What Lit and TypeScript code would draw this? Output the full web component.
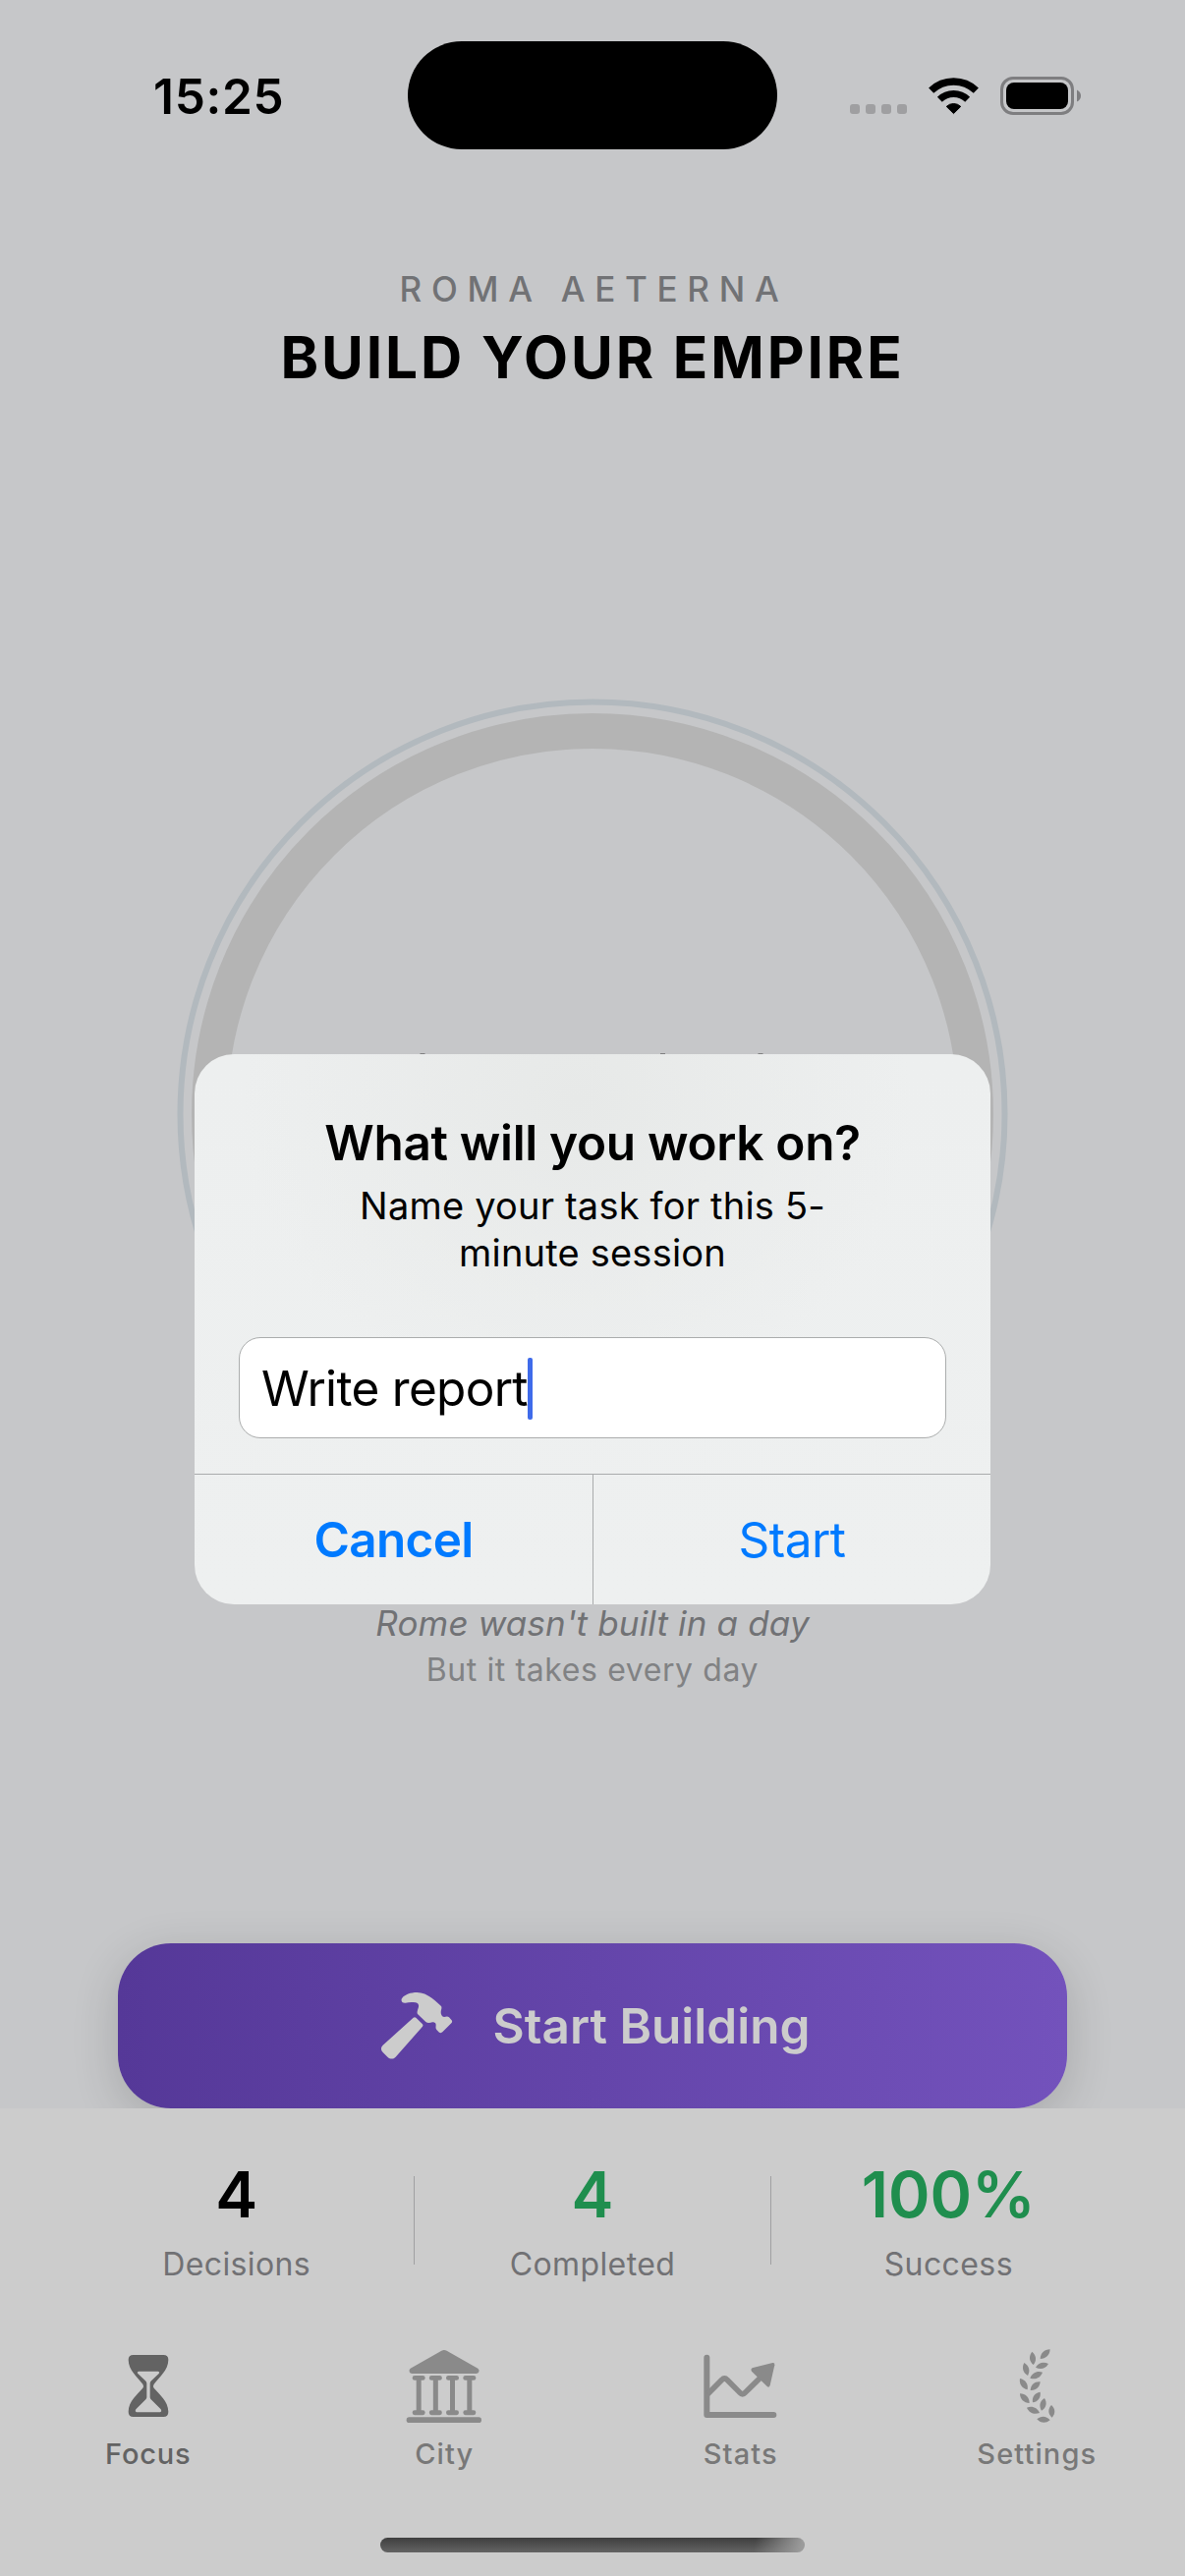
import { LitElement, html, css, svg } from "lit";
import { customElement } from "lit/decorators.js";

type Leaf = [number, number, number, number];

const leaves: Leaf[] = [
  [1137, 64, 1107, 93],
  [1082, 71, 1086, 111],
  [1132, 108, 1093, 119],
  [1058, 105, 1069, 144],
  [1114, 134, 1076, 152],
  [1045, 153, 1068, 187],
  [1107, 163, 1077, 189],
  [1045, 199, 1074, 228],
  [1107, 194, 1084, 226],
  [1120, 213, 1111, 251],
  [1066, 242, 1105, 258],
  [1141, 234, 1143, 272],
  [1097, 277, 1137, 280],
];

// A pointed leaf between two tips, bulging equally to both sides.
function leafPath([x1, y1, x2, y2]: Leaf): string {
  const len = Math.hypot(x2 - x1, y2 - y1);
  const nx = (-(y2 - y1) / len) * 12;
  const ny = ((x2 - x1) / len) * 12;
  const ax = x1 + (x2 - x1) * 0.3;
  const ay = y1 + (y2 - y1) * 0.3;
  const bx = x1 + (x2 - x1) * 0.7;
  const by = y1 + (y2 - y1) * 0.7;
  return `M${x1} ${y1}C${ax + nx} ${ay + ny} ${bx + nx} ${by + ny} ${x2} ${y2}C${bx - nx} ${by - ny} ${ax - nx} ${ay - ny} ${x1} ${y1}Z`;
}

const hourglass = svg`<path fill-rule="evenodd" d="M137 81H229Q244 81 244 96C244 128 215 150 200 170Q196 176 200 182C215 200 244 222 244 254Q244 270 229 270H137Q122 270 122 254C122 222 151 200 166 182Q170 176 166 170C151 150 122 128 122 96Q122 81 137 81ZM153 131Q147 133 151 138L174 160Q178 164 178 168V210Q178 214 175 217L145 247Q141 254 147 256H219Q225 254 221 247L191 217Q188 214 188 210V168Q188 164 192 160L215 138Q219 133 213 131Z"/>`;

const temple = svg`
  <path d="M1079 68Q1087 64 1095 68L1190 122Q1196 127 1193 133Q1191 138 1185 138H989Q983 138 981 133Q979 126 984 122Z"/>
  ${[1009.5, 1061, 1112.5, 1164.5].map(
    (x) => svg`
      <rect x=${x - 19.5} y="144" width="39" height="14.5" rx="7"/>
      <rect x=${x - 7.5} y="150" width="15" height="108"/>
      <rect x=${x - 19.5} y="250" width="39" height="14.5" rx="7"/>`
  )}
  <rect x="972" y="271" width="229" height="17" rx="8.5"/>`;

const chart = svg`
  <path d="M87 89V264H291" fill="none" stroke="currentColor" stroke-width="18" stroke-linecap="round" stroke-linejoin="round"/>
  <path d="M90 200L133 157Q141 148 149 157L188 196Q196 205 204 196L258 143" fill="none" stroke="currentColor" stroke-width="17"/>
  <path d="M228 120L288 105Q295 104 294 112L280 174Q277 182 271 177L224 131Q219 123 228 120Z"/>`;

const laurel = svg`${leaves.map((l) => svg`<path d=${leafPath(l)}/>`)}`;

@customElement("app-root")
export class AppRoot extends LitElement {
  static styles = css`
    :host {
      display: block;
      font-family: Inter, "Liberation Sans", sans-serif;
    }
    * {
      box-sizing: border-box;
    }
    .screen {
      position: relative;
      width: 1206px;
      height: 2622px;
      display: flex;
      flex-direction: column;
      overflow: hidden;
      background: #c6c7c9;
      color: #000;
      white-space: nowrap;
    }
    svg {
      display: block;
    }
    .status {
      height: 196px;
      padding-top: 42px;
      display: grid;
      grid-template-columns: 415px 376px 415px;
      align-items: start;
    }
    .time {
      padding: 0 0 0 156px;
      font-size: 49.5px;
      line-height: 112px;
      font-weight: 600;
      letter-spacing: 0.7px;
    }
    .island {
      height: 110px;
      border-radius: 55px;
      background: #000;
    }
    .signals {
      display: flex;
      align-items: center;
      height: 111px;
      padding-left: 74px;
    }
    .dots {
      display: flex;
      gap: 6px;
      padding-top: 27px;
    }
    .dots i {
      width: 10px;
      height: 10px;
      border-radius: 3px;
      background: #9f9fa1;
    }
    .wifi {
      margin-left: 22px;
    }
    .battery {
      margin-left: 22px;
    }
    .main {
      flex: 1;
      display: flex;
      flex-direction: column;
      align-items: center;
      padding-top: 76px;
    }
    .eyebrow {
      font-size: 35px;
      line-height: 44px;
      font-weight: 500;
      letter-spacing: 9.7px;
      padding-left: 3px;
      color: #717275;
    }
    .headline {
      margin: 12px 0 0;
      font-size: 58.5px;
      line-height: 72px;
      font-weight: 700;
      letter-spacing: 2.9px;
    }
    .dial {
      margin-top: 311px;
    }
    .quote {
      margin-top: 73px;
      font-size: 35px;
      line-height: 44px;
      font-style: italic;
      letter-spacing: 0.15px;
      color: #717275;
    }
    .subquote {
      margin-top: 4px;
      font-size: 32px;
      line-height: 44px;
      letter-spacing: 0.6px;
      color: #818284;
    }
    .cta {
      margin-top: auto;
      width: 966px;
      height: 168px;
      display: flex;
      align-items: center;
      justify-content: center;
      gap: 40px;
      padding-left: 5px;
      border-radius: 54px;
      background: linear-gradient(90deg, #553898, #7352bc);
      color: #ccc;
      box-shadow: 0 12px 48px rgba(0, 0, 0, 0.16);
      font-size: 49.5px;
      font-weight: 600;
      letter-spacing: 0;
    }
    .panel {
      position: relative;
      height: 476px;
      background: #ccc;
      padding-top: 48px;
      display: flex;
      flex-direction: column;
      align-items: center;
    }
    .stats {
      display: flex;
      align-items: center;
      width: 1086px;
      height: 131px;
    }
    .stat {
      flex: 1;
      text-align: center;
    }
    .rule {
      width: 1px;
      height: 90px;
      background: #a0a0a2;
    }
    .value {
      font-size: 64.5px;
      line-height: 80px;
      font-weight: 600;
    }
    .green {
      color: #1f8e4e;
    }
    .caption {
      margin-top: 10px;
      font-size: 32px;
      line-height: 41px;
      letter-spacing: 0.4px;
      color: #717174;
    }
    .tabs {
      display: grid;
      grid-template-columns: repeat(4, 1fr);
      width: 1206px;
      margin-top: 64px;
    }
    .tab {
      display: flex;
      flex-direction: column;
      align-items: center;
      color: #8a8a8a;
      font-size: 29px;
      font-weight: 500;
      line-height: 40px;
      letter-spacing: 1.1px;
    }
    .tab svg {
      fill: currentColor;
      margin-bottom: 9px;
    }
    .tab span {
      color: #787878;
    }
    .tab.on,
    .tab.on span {
      color: #636363;
      letter-spacing: 0.8px;
    }
    .home {
      width: 432px;
      height: 15px;
      margin-top: 65px;
      border-radius: 8px;
      background: linear-gradient(100deg, transparent 88%, #9b9b9b 99%),
        linear-gradient(#3e3e3e, #646464);
    }
    .alert {
      position: absolute;
      left: 198px;
      top: 1073px;
      width: 810px;
      height: 560px;
      border-radius: 40px;
      overflow: hidden;
      display: flex;
      flex-direction: column;
      background: radial-gradient(ellipse 340px 320px at 48% 8%, #e7e9e8, rgba(231, 233, 232, 0)),
        linear-gradient(#edefef, #eef0f0);
    }
    .title {
      margin: 60px 0 0;
      text-align: center;
      font-size: 49.5px;
      line-height: 60px;
      font-weight: 600;
      letter-spacing: -0.32px;
    }
    .message {
      margin: 10px 0 0;
      text-align: center;
      font-size: 38px;
      line-height: 48px;
      letter-spacing: 0.2px;
    }
    .field {
      display: flex;
      align-items: center;
      margin: 62px 45px 0;
      height: 103px;
      padding: 1px 0 0 22px;
      border: 1.5px solid #abadad;
      border-radius: 22px;
      background: #fff;
      font-size: 49.5px;
      letter-spacing: -0.7px;
    }
    .caret {
      width: 5px;
      height: 63px;
      border-radius: 2px;
      background: #3f6bea;
    }
    .actions {
      margin-top: auto;
      height: 133px;
      display: grid;
      grid-template-columns: 406px 404px;
      border-top: 1px solid #a9abac;
    }
    .action {
      display: grid;
      place-items: center;
      color: #007aff;
      font-size: 49.5px;
      letter-spacing: -0.5px;
    }
    .action.bold {
      font-weight: 600;
      letter-spacing: -0.7px;
      border-right: 1px solid #a9abac;
    }
  `;

  private tab(label: string, box: string, icon: unknown, on = false) {
    return html`<div class="tab ${on ? "on" : ""}">
      <svg width="80" height="80" viewBox=${box}>${icon}</svg>
      <span>${label}</span>
    </div>`;
  }

  private stat(value: string, label: string, green = false) {
    return html`<div class="stat">
      <div class="value ${green ? "green" : ""}">${value}</div>
      <div class="caption">${label}</div>
    </div>`;
  }

  render() {
    return html`<div class="screen">
      <div class="status">
        <div class="time">15:25</div>
        <div class="island"></div>
        <div class="signals">
          <div class="dots"><i></i><i></i><i></i><i></i></div>
          <svg class="wifi" width="51" height="38" viewBox="0 0 50.5 38">
            <g fill="none" stroke="#000">
              <path d="M2.4 13.2A33 33 0 0 1 48.1 13.2" stroke-width="7.4" />
              <path d="M11.1 22.2A20.3 20.3 0 0 1 39.4 22.2" stroke-width="7" />
            </g>
            <path d="M25.25 36.6L18 29.4A10.5 10.5 0 0 1 32.5 29.4Z" stroke="#000" stroke-linejoin="round" />
          </svg>
          <svg class="battery" width="83" height="39" viewBox="0 0 83 39">
            <rect x="1.5" y="1.5" width="72" height="36" rx="11.5" fill="none" stroke="#7e7e80" stroke-width="3" />
            <rect x="6" y="6" width="63" height="27" rx="8" />
            <path d="M78 13.5Q82 15.5 82 19.5Q82 23.500 78 25.500Z" fill="#7e7e80" />
          </svg>
        </div>
      </div>

      <div class="main">
        <div class="eyebrow">ROMA AETERNA</div>
        <h1 class="headline">BUILD YOUR EMPIRE</h1>
        <svg class="dial" width="846" height="846" viewBox="0 0 846 846" fill="none">
          <circle cx="423" cy="423" r="419.5" stroke="#b2b9be" stroke-width="6" />
          <circle cx="423" cy="423" r="390" stroke="#b4b4b4" stroke-width="36" />
          <path d="M247.500 361.500h5M492 361.500h5M591.500 361.500h5" stroke="#808080" />
        </svg>
        <div class="quote">Rome wasn't built in a day</div>
        <div class="subquote">But it takes every day</div>
        <div class="cta">
          <svg width="75" height="70" viewBox="78 83 225 210" fill="#ccc">
            <path d="M143 106C150 93 170 86 190 86C215 86 235 100 264 128C267 133 264 138 263 146C263 153 266 160 273 161C279 159 285 158 288 162L296 171C298 174 298 178 295 180L268 207C265 210 261 210 258 208L250 200C246 196 248 190 248 184C247 178 242 177 237 177C230 179 222 180 217 176L192 152C189 148 192 140 194 134C197 126 195 119 186 117C173 115 165 116 155 118C146 119 141 113 143 106Z" />
            <path d="M179 163Q183 160 187 163L207 183Q210 187 207 190L125 283C118 291 108 290 101 284L86 269C79 262 79 253 86 247Z" />
          </svg>
          <span>Start Building</span>
        </div>
      </div>

      <div class="panel">
        <div class="stats">
          ${this.stat("4", "Decisions")}
          <div class="rule"></div>
          ${this.stat("4", "Completed", true)}
          <div class="rule"></div>
          ${this.stat("100%", "Success", true)}
        </div>
        <div class="tabs">
          ${this.tab("Focus", "63 57 240 240", hourglass, true)}
          ${this.tab("City", "967 57 240 240", temple)}
          ${this.tab("Stats", "71 57 240 240", chart)}
          ${this.tab("Settings", "976 57 240 240", laurel)}
        </div>
        <div class="home"></div>
      </div>

      <div class="alert">
        <h2 class="title">What will you work on?</h2>
        <p class="message">Name your task for this 5-<br />minute session</p>
        <div class="field"><span>Write report</span><i class="caret"></i></div>
        <div class="actions">
          <div class="action bold">Cancel</div>
          <div class="action">Start</div>
        </div>
      </div>
    </div>`;
  }
}
